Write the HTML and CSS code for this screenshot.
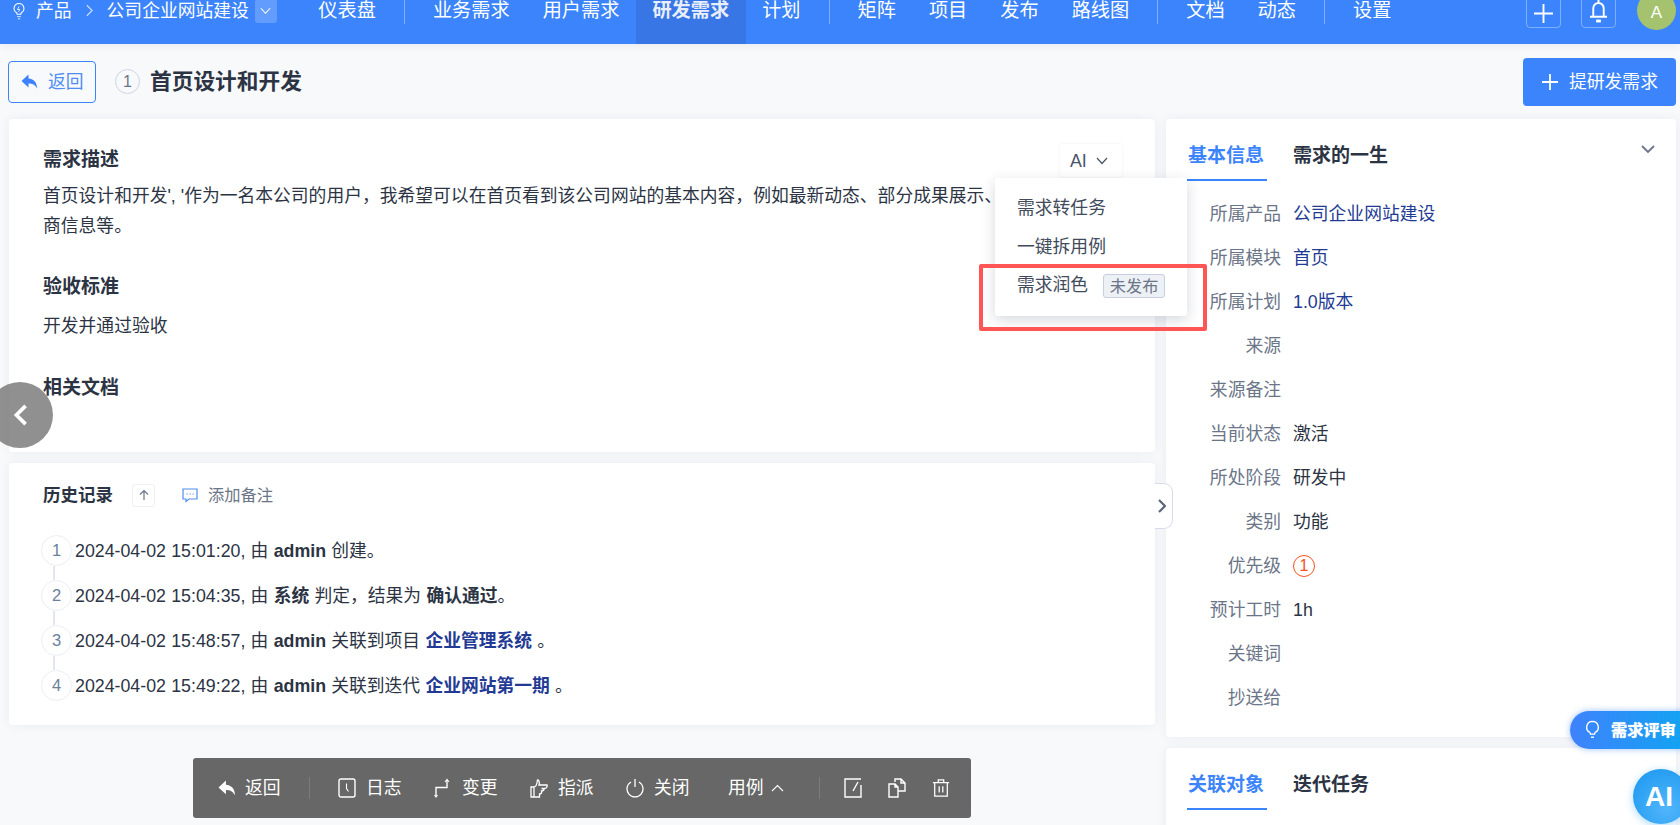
FILE: index.html
```html
<!DOCTYPE html>
<html lang="zh-CN">
<head>
<meta charset="utf-8">
<title>首页设计和开发</title>
<link rel="stylesheet" href="styles.css">
</head>
<body>
<header class="topbar">
  <div class="topbar-row">
    <svg class="bulb" viewBox="0 0 17 24" fill="none" stroke="#fff" stroke-width="1.4"><path d="M8.500 2a6.500 6.500 0 0 0-3.500 12c.8.6 1 1.300 1 2.200h5c0-.9.2-1.600 1-2.200A6.500 6.500 0 0 0 8.500 2z"/><path d="M6 19.500h5M7 22.500h3M8.500 6l-2 4h3l-1.500 3" stroke-width="1.100"/></svg>
    <span class="crumb">产品</span>
    <svg class="crumb-arrow" viewBox="0 0 8 14" fill="none" stroke="#cfe0ff" stroke-width="1.300"><path d="M1 1l6 6-6 6"/></svg>
    <span class="crumb">公司企业网站建设</span>
    <span class="crumb-drop"><svg viewBox="0 0 12 8" fill="none" stroke="#fff" stroke-width="1.200"><path d="M1 1l5 5.500L11 1"/></svg></span>
    <nav class="nav">
      <a class="nav-item">仪表盘</a><i class="nav-sep"></i>
      <a class="nav-item">业务需求</a><a class="nav-item">用户需求</a><a class="nav-item active">研发需求</a><a class="nav-item">计划</a><i class="nav-sep"></i>
      <a class="nav-item">矩阵</a><a class="nav-item">项目</a><a class="nav-item">发布</a><a class="nav-item">路线图</a><i class="nav-sep"></i>
      <a class="nav-item">文档</a><a class="nav-item">动态</a><i class="nav-sep"></i>
      <a class="nav-item">设置</a>
    </nav>
    <div class="top-tools">
      <span class="tool-box"><svg class="tool-plus" viewBox="0 0 20 20" fill="none" stroke="#fff" stroke-width="2"><path d="M10 0v20M0 10h20"/></svg></span>
      <span class="tool-box"><svg class="tool-bell" viewBox="0 0 20 24" fill="none" stroke="#fff" stroke-width="2"><path d="M10 0v3M4.500 17V8.500a5.500 5.500 0 0 1 11 0V17M1 17.500h18"/><path d="M7.500 22h5" stroke-width="3"/></svg></span>
      <span class="avatar">A</span>
    </div>
  </div>
</header>

<main class="page">
  <div class="title-row">
    <a class="back-btn">
      <svg viewBox="0 0 18 18" fill="#3b82fc"><path d="M7.500 1.500L.5 8l7 6.500v-4c4 0 6.500 1.200 8.500 5 0-6-3-9.500-8.500-10z"/></svg>
      返回
    </a>
    <span class="num-circle">1</span>
    <h1 class="page-title">首页设计和开发</h1>
    <a class="primary-btn"><svg viewBox="0 0 16 16" fill="none" stroke="#fff" stroke-width="1.800"><path d="M8 0v16M0 8h16"/></svg>提研发需求</a>
  </div>

  <div class="columns">
    <div class="col-left">
      <section class="card desc-card">
        <h2 class="sec-title">需求描述</h2>
        <p class="sec-text first">首页设计和开发', '作为一名本公司的用户，我希望可以在首页看到该公司网站的基本内容，例如最新动态、部分成果展示、合作<br>商信息等。</p>
        <h2 class="sec-title spaced">验收标准</h2>
        <p class="sec-text">开发并通过验收</p>
        <h2 class="sec-title spaced-doc">相关文档</h2>
        <a class="ai-btn">AI<svg viewBox="0 0 12 8" fill="none" stroke="#4a5568" stroke-width="1.200"><path d="M1 1l5 5.500L11 1"/></svg></a>
        <div class="ai-menu">
          <div class="ai-menu-item">需求转任务</div>
          <div class="ai-menu-item">一键拆用例</div>
          <div class="ai-menu-item">需求润色<span class="ai-tag">未发布</span></div>
        </div>
      </section>

      <section class="card history-card">
        <div class="history-head">
          <h3 class="history-title">历史记录</h3>
          <span class="sort-btn"><svg viewBox="0 0 12 12" fill="none" stroke="#6b7588" stroke-width="1.200"><path d="M6 11V1.500M2 5.500l4-4 4 4"/></svg></span>
          <svg class="note-icon" viewBox="0 0 16 16" fill="none" stroke="#4f8df5" stroke-width="1.200"><path d="M1 2h14v10H7l-3 2.500V12H1z"/><path d="M4.500 7h1.200M7.500 7h1.200M10.500 7h1.200"/></svg>
          <span class="note-text">添加备注</span>
        </div>
        <ol class="timeline">
          <li class="tl-item"><span class="tl-num">1</span><span>2024-04-02 15:01:20, 由 <b>admin</b> 创建。</span></li>
          <li class="tl-item"><span class="tl-num">2</span><span>2024-04-02 15:04:35, 由 <b>系统</b> 判定，结果为 <b>确认通过</b>。</span></li>
          <li class="tl-item"><span class="tl-num">3</span><span>2024-04-02 15:48:57, 由 <b>admin</b> 关联到项目 <b class="link">企业管理系统</b> 。</span></li>
          <li class="tl-item"><span class="tl-num">4</span><span>2024-04-02 15:49:22, 由 <b>admin</b> 关联到迭代 <b class="link">企业网站第一期</b> 。</span></li>
        </ol>
      </section>
    </div>

    <div class="col-right">
      <section class="card info-card">
        <div class="tabs">
          <span class="tab on">基本信息</span><span class="tab">需求的一生</span>
          <svg class="tabs-chev" viewBox="0 0 14 9" fill="none" stroke="#6b7588" stroke-width="1.800"><path d="M1 1l6 6 6-6"/></svg>
        </div>
        <dl class="info-list">
          <div class="info-row"><dt>所属产品</dt><dd class="link">公司企业网站建设</dd></div>
          <div class="info-row"><dt>所属模块</dt><dd class="link">首页</dd></div>
          <div class="info-row"><dt>所属计划</dt><dd class="link">1.0版本</dd></div>
          <div class="info-row"><dt>来源</dt><dd></dd></div>
          <div class="info-row"><dt>来源备注</dt><dd></dd></div>
          <div class="info-row"><dt>当前状态</dt><dd>激活</dd></div>
          <div class="info-row"><dt>所处阶段</dt><dd>研发中</dd></div>
          <div class="info-row"><dt>类别</dt><dd>功能</dd></div>
          <div class="info-row"><dt>优先级</dt><dd><span class="pri">1</span></dd></div>
          <div class="info-row"><dt>预计工时</dt><dd>1h</dd></div>
          <div class="info-row"><dt>关键词</dt><dd></dd></div>
          <div class="info-row"><dt>抄送给</dt><dd></dd></div>
        </dl>
      </section>
      <section class="card rel-card">
        <div class="tabs">
          <span class="tab on">关联对象</span><span class="tab">迭代任务</span>
        </div>
      </section>
    </div>
  </div>
</main>

<div class="toolbar">
  <a class="tb-item first"><svg class="tb-back" viewBox="0 0 18 18" fill="#fff"><path d="M7.500 1.500L.5 8l7 6.500v-4c4 0 6.500 1.200 8.500 5 0-6-3-9.500-8.500-10z"/></svg>返回</a>
  <i class="tb-sep"></i>
  <a class="tb-item"><svg viewBox="0 0 18 20" fill="none" stroke="#fff" stroke-width="1.400"><rect x="1" y="1" width="16" height="18" rx="2"/><path d="M8.500 5.500v5l2 3" stroke-width="1.100"/></svg>日志</a>
  <a class="tb-item"><svg viewBox="0 0 18 20" fill="none" stroke="#fff" stroke-width="1.400"><path d="M2 18v-8.500h11V2"/><path d="M11 4l2-2.500L15 4M.5 17l1.500 2 1.500-2" stroke-width="1.100"/></svg>变更</a>
  <a class="tb-item"><svg viewBox="0 0 18 20" fill="none" stroke="#fff" stroke-width="1.300"><path d="M1 9h3v10H1zM4 9c2 0 3-3 3.500-7 2 0 2 3 1.500 5h8c.5 2-.5 3-2 3.500H11.500l2.500.5c0 1.500-1.500 2-2.500 2 .5 2-.5 3-2 3V19H4"/></svg>指派</a>
  <a class="tb-item"><svg viewBox="0 0 18 20" fill="none" stroke="#fff" stroke-width="1.300"><path d="M9 1v8"/><path d="M5 4a8 8 0 1 0 8 0"/></svg>关闭</a>
  <a class="tb-item case">用例<svg class="tb-up" viewBox="0 0 13 8" fill="none" stroke="#fff" stroke-width="1.100"><path d="M1 7l5.500-5.500L12 7"/></svg></a>
  <i class="tb-sep late"></i>
  <span class="tb-icons">
    <svg viewBox="0 0 18 20" fill="none" stroke="#fff" stroke-width="1.400"><path d="M17 1H1v18h16V7"/><path d="M14 4l-5 9"/></svg>
    <svg viewBox="0 0 18 20" fill="none" stroke="#fff" stroke-width="1.400"><path d="M1 6h6l3 3v10H1zM7 6v3h3"/><path d="M7 4V1h6l4 4v8h-7M13 1v4h4"/></svg>
    <svg viewBox="0 0 20 20" fill="none" stroke="#fff" stroke-width="1.400"><path d="M1 4h18M7 4V1h6v3M3 4v15h14V4M8 8v7M12 8v7"/></svg>
  </span>
</div>

<a class="float-back"><svg viewBox="0 0 16 24" fill="none" stroke="#fff" stroke-width="4"><path d="M13 2L3 12l10 10"/></svg></a>
<a class="side-handle"><svg viewBox="0 0 8 14" fill="none" stroke="#5c6678" stroke-width="2.200"><path d="M1 1l6 6-6 6"/></svg></a>
<div class="red-mark"></div>
<a class="review-pill"><svg viewBox="0 0 16 22" fill="none" stroke="#fff" stroke-width="1.500"><path d="M8 1.500a6.500 6.500 0 0 0-3 12.200c.6.400.8 1 .8 1.800h4.400c0-.8.200-1.400.8-1.800A6.500 6.500 0 0 0 8 1.500zM6.500 19h3"/></svg>需求评审</a>
<a class="ai-float">AI</a>
</body>
</html>
```
FILE: styles.css
```css
* { box-sizing: border-box; }
html, body { margin: 0; padding: 0; height: 825px; overflow: hidden; }
body {
  position: relative;
  background: #f8f9fb;
  color: #2c3444;
  font: 17.8px/30px "Liberation Sans", "Noto Sans CJK SC", sans-serif;
}
a { color: inherit; text-decoration: none; }
h1, h2, h3, p, dl, dd, ol { margin: 0; padding: 0; }

.topbar { height: 44px; background: #3b84fc; color: #fff; overflow: hidden; box-shadow: 0 2px 8px rgba(0,0,0,.06); position: relative; }
.topbar-row { display: flex; align-items: center; height: 50px; margin-top: -14.500px; padding: 0 4px 0 12px; }
.bulb { width: 14px; height: 18px; margin-right: 10px; flex: none; }
.crumb { white-space: nowrap; }
.crumb-arrow { width: 7px; height: 13px; margin: 0 14px; flex: none; }
.crumb-drop { display: flex; align-items: center; justify-content: center; width: 22px; height: 24px; margin-left: 6px; background: rgba(255,255,255,.2); border-radius: 3px; }
.crumb-drop svg { width: 11px; height: 8px; }
.nav { display: flex; align-items: flex-start; margin-left: 25px; height: 60px; font-size: 19.200px; }
.nav-item { padding: 0 16.500px; height: 70px; line-height: 60px; white-space: nowrap; }
.nav-item.active { background: #3776e4; font-weight: 700; color: #e8eefb; }
.nav-sep { align-self: center; width: 1px; height: 27px; margin: 0 11.500px; background: rgba(255,255,255,.35); }
.top-tools { display: flex; align-items: center; margin-left: auto; gap: 20px; }
.tool-box { display: flex; align-items: flex-end; justify-content: center; width: 35px; height: 35px; padding-bottom: 4px; border: 1px solid rgba(255,255,255,.35); border-radius: 4px; }
.tool-plus { width: 19px; height: 19px; }
.tool-bell { width: 19px; height: 23px; }
.avatar { width: 39px; height: 39px; margin-left: 1px; border-radius: 50%; background: #a5c26e; text-align: center; line-height: 39px; font-size: 17px; padding-top: 2px; }

.page { padding: 0 4px 0 8px; }
.title-row { display: flex; align-items: center; height: 75px; }
.back-btn { display: flex; align-items: center; gap: 9px; width: 88px; height: 42px; padding-left: 12px; color: #4f8df5; border: 1.500px solid #3b84fc; border-radius: 4px; }
.back-btn svg { width: 18px; height: 18px; }
.num-circle { width: 25px; height: 25px; margin-left: 19px; border: 1px solid #d0d4e6; border-radius: 50%; text-align: center; font-size: 16px; line-height: 23px; color: #6b7588; }
.page-title { margin-left: 10px; font-size: 21.700px; font-weight: 700; }
.primary-btn { display: flex; align-items: center; gap: 11px; margin-left: auto; height: 48px; width: 153px; padding-left: 19px; background: #3b84fc; border-radius: 4px; color: #fff; }
.primary-btn svg { width: 16px; height: 16px; }

.columns { display: flex; align-items: flex-start; gap: 11px; }
.col-left { width: 1146px; margin-left: 1px; display: flex; flex-direction: column; gap: 11px; }
.col-right { width: 510px; display: flex; flex-direction: column; gap: 11px; }
.card { background: #fff; border-radius: 4px; box-shadow: 0 0 12px rgba(30,40,70,.06); }

.desc-card { position: relative; height: 333px; padding: 26px 34px 0; }
.sec-title { font-size: 19px; font-weight: 700; line-height: 30px; }
.sec-text { margin-top: 9px; white-space: nowrap; }
.sec-text.first { margin-top: 6px; }
.sec-title.spaced { margin-top: 31px; }
.sec-title.spaced-doc { margin-top: 32px; }
.ai-btn { position: absolute; left: 1051px; top: 25px; display: flex; align-items: center; gap: 9px; width: 62px; height: 33px; padding-left: 10px; border-radius: 3px; box-shadow: 0 0 3px rgba(30,40,70,.08); color: #4a5568; background: #fff; }
.ai-btn svg { width: 12px; height: 8px; }
.ai-menu { position: absolute; z-index: 3; left: 986px; top: 59px; width: 192px; height: 138px; padding: 11px 0 0 22px; background: #fff; border-radius: 3px; box-shadow: 0 4px 14px rgba(30,40,70,.18); color: #424b5c; }
.ai-menu-item { display: flex; align-items: center; height: 38.500px; }
.ai-tag { margin-left: 15px; width: 62px; height: 24px; margin-top: 2px; background: #edf0f5; border: 1px solid #c5cfe0; border-radius: 3px; text-align: center; font-size: 16.200px; line-height: 22px; color: #6b7588; }

.history-card { height: 262px; padding: 17px 34px 0; }
.history-head { display: flex; align-items: center; height: 30px; }
.history-title { font-size: 17.500px; font-weight: 700; }
.sort-btn { display: flex; align-items: center; justify-content: center; width: 23px; height: 23px; margin-left: 19px; border: 1px solid #eff1f6; border-radius: 3px; }
.sort-btn svg { width: 12px; height: 12px; }
.note-icon { width: 16px; height: 16px; margin-left: 27px; }
.note-text { margin-left: 10px; font-size: 16.300px; color: #6b7588; }
.timeline { list-style: none; margin: 18px 0 0 -2px; word-spacing: .3px; }
.tl-item { position: relative; display: flex; align-items: center; height: 45px; gap: 3px; }
.tl-item + .tl-item::before { content: ""; position: absolute; left: 12px; top: -7px; width: 1.500px; height: 14px; background: #e4e6ef; }
.tl-num { width: 31px; height: 31px; border: 1.500px solid #eceef5; border-radius: 50%; text-align: center; font-size: 16.500px; line-height: 28px; color: #6b7f9c; background: #fff; }
.link { color: #233a94; }

.info-card { height: 618px; }
.tabs { position: relative; display: flex; gap: 26px; height: 62px; padding-left: 21px; }
.tab { height: 62px; padding-top: 22px; font-size: 19px; font-weight: 700; line-height: 30px; }
.tab.on { width: 80px; color: #3b84fc; border-bottom: 2.500px solid #3b84fc; padding-left: 1px; white-space: nowrap; }
.tabs-chev { position: absolute; right: 21px; top: 26px; width: 14px; height: 9px; }
.info-list { margin-top: 11px; }
.info-row { display: flex; height: 44px; align-items: center; gap: 12px; }
.info-row dt { width: 115px; text-align: right; color: #6b7588; }
.pri { display: block; width: 22px; height: 22px; border: 1px solid #f4511e; border-radius: 50%; text-align: center; line-height: 19px; font-size: 16px; color: #f4511e; }
.rel-card { height: 90px; }

.toolbar { position: absolute; z-index: 4; left: 193px; top: 758px; display: flex; align-items: center; width: 778px; height: 60px; padding-left: 25px; background: #666766; border-radius: 3px; color: #fff; font-size: 17.800px; }
.tb-item { display: flex; align-items: center; gap: 10px; width: 64px; margin-right: 32px; white-space: nowrap; }
.tb-item svg { width: 18px; height: 20px; flex: none; }
.tb-item.first { width: 63px; gap: 8px; margin-right: 28px; }
.tb-item.first .tb-back { width: 19px; height: 19px; }
.tb-item.case { width: 56px; margin: 0 0 0 6px; gap: 7px; }
.tb-item.case .tb-up { width: 13px; height: 8px; }
.tb-sep { width: 1px; height: 22px; margin-right: 28px; background: rgba(255,255,255,.14); }
.tb-sep.late { margin: 0 24px 0 35px; }
.tb-icons { display: flex; align-items: center; gap: 26px; }
.tb-icons svg { width: 18px; height: 20px; }

.float-back { position: absolute; z-index: 2; left: -13px; top: 382px; display: flex; align-items: center; justify-content: center; width: 66px; height: 66px; padding-left: 1px; border-radius: 50%; background: rgba(120,120,120,.82); }
.float-back svg { width: 16px; height: 22px; }
.side-handle { position: absolute; z-index: 2; left: 1155px; top: 483px; display: flex; align-items: center; width: 18px; height: 46px; padding-left: 3px; background: #fff; border: 1px solid #d8dbee; border-left: 0; border-radius: 0 9px 9px 0; }
.side-handle svg { width: 8px; height: 14px; }
.red-mark { position: absolute; z-index: 5; left: 979px; top: 264px; width: 228px; height: 67px; border: 4px solid #ff5555; border-radius: 2px; }
.review-pill { position: absolute; z-index: 5; left: 1570px; top: 711px; display: flex; align-items: center; gap: 11px; width: 120px; height: 38px; padding-left: 15px; border-radius: 19px 0 0 19px; background: linear-gradient(90deg, #3f82fc, #10a5f2); box-shadow: 0 0 6px rgba(59,132,252,.5); color: #fff; font-size: 16.300px; font-weight: 700; text-shadow: 0 0 1px #fff; white-space: nowrap; }
.review-pill svg { width: 15px; height: 20px; flex: none; }
.ai-float { position: absolute; z-index: 5; left: 1633px; top: 769px; width: 56px; height: 55px; padding-left: 12px; border-radius: 50%; background: radial-gradient(circle at 60% 70%, #52b5fb, #1796ef); box-shadow: 0 2px 8px rgba(23,150,239,.35); color: #fff; font-size: 28px; font-weight: 700; line-height: 55px; }
```
